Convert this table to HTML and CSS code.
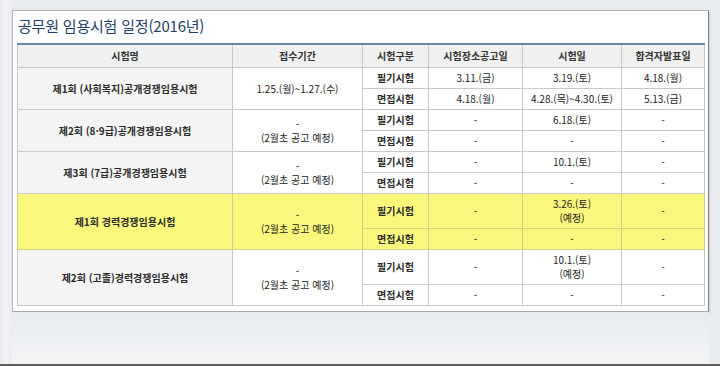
FILE: index.html
```html
<!DOCTYPE html>
<html lang="ko">
<head>
<meta charset="utf-8">
<title>공무원 임용시험 일정(2016년)</title>
<link rel="stylesheet" href="styles.css">
</head>
<body>
<div class="frame">
  <div class="panel">
    <h1 class="title">공무원 임용시험 일정(2016년)</h1>
    <table class="sched">
      <colgroup>
        <col class="c1"><col class="c2"><col class="c3"><col class="c4"><col class="c5"><col class="c6">
      </colgroup>
      <thead>
        <tr>
          <th>시험명</th><th>접수기간</th><th>시험구분</th><th>시험장소공고일</th><th>시험일</th><th>합격자발표일</th>
        </tr>
      </thead>
      <tbody>
        <tr>
          <td class="name" rowspan="2">제1회 (사회복지)공개경쟁임용시험</td>
          <td rowspan="2">1.25.(월)~1.27.(수)</td>
          <td class="kind">필기시험</td><td>3.11.(금)</td><td>3.19.(토)</td><td>4.18.(월)</td>
        </tr>
        <tr>
          <td class="kind">면접시험</td><td>4.18.(월)</td><td>4.28.(목)~4.30.(토)</td><td>5.13.(금)</td>
        </tr>
        <tr>
          <td class="name" rowspan="2">제2회 (8·9급)공개경쟁임용시험</td>
          <td rowspan="2">-<br>(2월초 공고 예정)</td>
          <td class="kind">필기시험</td><td>-</td><td>6.18.(토)</td><td>-</td>
        </tr>
        <tr>
          <td class="kind">면접시험</td><td>-</td><td>-</td><td>-</td>
        </tr>
        <tr>
          <td class="name" rowspan="2">제3회 (7급)공개경쟁임용시험</td>
          <td rowspan="2">-<br>(2월초 공고 예정)</td>
          <td class="kind">필기시험</td><td>-</td><td>10.1.(토)</td><td>-</td>
        </tr>
        <tr>
          <td class="kind">면접시험</td><td>-</td><td>-</td><td>-</td>
        </tr>
        <tr class="hl">
          <td class="name" rowspan="2">제1회 경력경쟁임용시험</td>
          <td rowspan="2">-<br>(2월초 공고 예정)</td>
          <td class="kind">필기시험</td><td>-</td><td>3.26.(토)<br>(예정)</td><td>-</td>
        </tr>
        <tr class="hl">
          <td class="kind">면접시험</td><td>-</td><td>-</td><td>-</td>
        </tr>
        <tr>
          <td class="name" rowspan="2">제2회 (고졸)경력경쟁임용시험</td>
          <td rowspan="2">-<br>(2월초 공고 예정)</td>
          <td class="kind">필기시험</td><td>-</td><td>10.1.(토)<br>(예정)</td><td>-</td>
        </tr>
        <tr>
          <td class="kind">면접시험</td><td>-</td><td>-</td><td>-</td>
        </tr>
      </tbody>
    </table>
  </div>
  <div class="foot"></div>
</div>
</body>
</html>
```

FILE: styles.css
```css
html, body {
  margin: 0;
  padding: 0;
}
body {
  width: 720px;
  height: 366px;
  overflow: hidden;
  background: #e9ecef;
  font-family: "Noto Sans CJK KR", "Noto Sans", sans-serif;
  color: #222;
}
.frame {
  height: 366px;
  box-sizing: border-box;
  padding: 10px 11px 0 12px;
  background: linear-gradient(to right, #e4e8eb 0, #f1f3f5 6px, #e9ecef 12px, #e9ecef 100%);
  border-bottom: 2px solid #5d5d5d;
  display: flex;
  flex-direction: column;
}
.panel {
  height: 302px;
  box-sizing: border-box;
  background: #fff;
  border: 1px solid #b4b4b4;
  border-right-color: #7c7c7c;
  border-bottom-color: #a8a8a8;
  box-shadow: 1px 2px 2px rgba(0, 0, 0, 0.12);
  padding: 0 0 0 4px;
}
.foot {
  flex: 1;
  background: linear-gradient(to bottom, #e7eaed, #eef1f3 60%, #f3f5f6);
}
.title {
  margin: 0 0 5px 1px;
  padding-top: 3px;
  font-size: 15px;
  line-height: 24px;
  font-weight: 400;
  color: #1f416a;
  letter-spacing: -0.2px;
}
.sched {
  border-collapse: collapse;
  table-layout: fixed;
  width: 687px;
  font-size: 10px;
  line-height: 14px;
  border-top: 2px solid #6a88ad;
}
.c1 { width: 215px; }
.c2 { width: 130px; }
.c3 { width: 66px; }
.c4 { width: 94px; }
.c5 { width: 99px; }
.c6 { width: 83px; }
.sched th,
.sched td {
  border: 1px solid #c9c9c9;
  text-align: center;
  vertical-align: middle;
  padding: 3px 2px;
  white-space: nowrap;
}
.sched th {
  background: #f0f0f0;
  font-weight: 700;
  padding: 4px 2px;
  color: #333;
  border-top: 0;
}
.sched td.name {
  background: #f4f4f4;
  font-weight: 700;
  color: #2b2b2b;
}
.sched td.kind {
  font-weight: 700;
  color: #2b2b2b;
}
.sched tr.hl td {
  background: #faf87c;
  border-color: #d2cf86;
}
```
